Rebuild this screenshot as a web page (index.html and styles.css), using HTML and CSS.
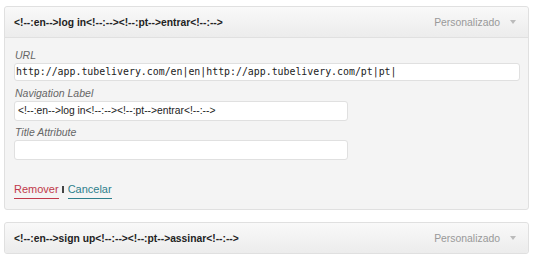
FILE: index.html
```html
<!DOCTYPE html>
<html>
<head>
<meta charset="utf-8">
<link rel="stylesheet" href="styles.css">
</head>
<body>
<div class="item open">
  <div class="bar">
    <span class="title">&lt;!--:en--&gt;log in&lt;!--:--&gt;&lt;!--:pt--&gt;entrar&lt;!--:--&gt;</span>
    <span class="type">Personalizado <span class="arrow"></span></span>
  </div>
  <div class="settings">
    <label class="lbl">URL</label>
    <div class="input wide mono">http://app.tubelivery.com/en|en|http://app.tubelivery.com/pt|pt|</div>
    <label class="lbl">Navigation Label</label>
    <div class="input half">&lt;!--:en--&gt;log in&lt;!--:--&gt;&lt;!--:pt--&gt;entrar&lt;!--:--&gt;</div>
    <label class="lbl">Title Attribute</label>
    <div class="input half"></div>
    <div class="actions">
      <a class="remove">Remover</a><span class="sep"></span><a class="cancel">Cancelar</a>
    </div>
  </div>
</div>
<div class="item">
  <div class="bar">
    <span class="title">&lt;!--:en--&gt;sign up&lt;!--:--&gt;&lt;!--:pt--&gt;assinar&lt;!--:--&gt;</span>
    <span class="type">Personalizado <span class="arrow"></span></span>
  </div>
</div>
</body>
</html>
```
FILE: styles.css
```css
html, body { margin: 0; padding: 0; background: #fff; }
body {
  padding: 6px 11px 0 4px;
  font-family: "Liberation Sans", Arial, sans-serif;
  color: #333;
}
.item {
  border: 1px solid #e0e0e0;
  border-radius: 3px;
  background: #f4f4f4;
  margin-bottom: 12px;
}
.bar {
  display: flex;
  align-items: center;
  justify-content: space-between;
  height: 30px;
  padding: 0 12px 0 9px;
  background: linear-gradient(#f9f9f9, #ececec);
  border-radius: 3px;
}
.open .bar {
  border-bottom: 1px solid #e0e0e0;
  border-radius: 3px 3px 0 0;
}
.title {
  font-weight: bold;
  font-size: 10.3px;
  color: #222;
}
.type {
  font-size: 10.4px;
  color: #999;
  display: flex;
  align-items: center;
}
.arrow {
  display: inline-block;
  width: 0; height: 0;
  margin-left: 10px;
  border-left: 3px solid transparent;
  border-right: 3px solid transparent;
  border-top: 4px solid #bbb;
}
.settings {
  padding: 10px 9px 10px 9px;
  display: flex;
  flex-direction: column;
}
.lbl {
  font-style: italic;
  font-size: 10.5px;
  color: #666;
  line-height: 14px;
  margin-bottom: 1px;
  padding-left: 1px;
}
.input {
  box-sizing: border-box;
  height: 20px;
  background: #fff;
  border: 1px solid #e0e0e0;
  border-radius: 3px;
  padding: 0 3px;
  font-size: 10.3px;
  line-height: 18px;
  color: #222;
  margin-bottom: 4px;
  white-space: nowrap;
  overflow: hidden;
}
.wide { width: 506px; height: 18px; line-height: 16px; margin-bottom: 5px; }
.half { width: 334px; }
.mono {
  font-family: "DejaVu Sans Mono", monospace;
  font-size: 9.9px;
  padding-left: 1px;
}
.actions {
  margin-top: 19px;
  font-size: 11px;
  line-height: 13px;
  display: flex;
  align-items: center;
}
.remove {
  color: #c0394a;
  border-bottom: 1px solid #c0394a;
  padding-bottom: 2px;
}
.sep {
  display: inline-block;
  width: 2px;
  height: 7px;
  background: #444;
  margin: 0 4px 4px 3px;
}
.cancel {
  color: #2e7f8c;
  border-bottom: 1px solid #2e7f8c;
  padding-bottom: 2px;
}
```
